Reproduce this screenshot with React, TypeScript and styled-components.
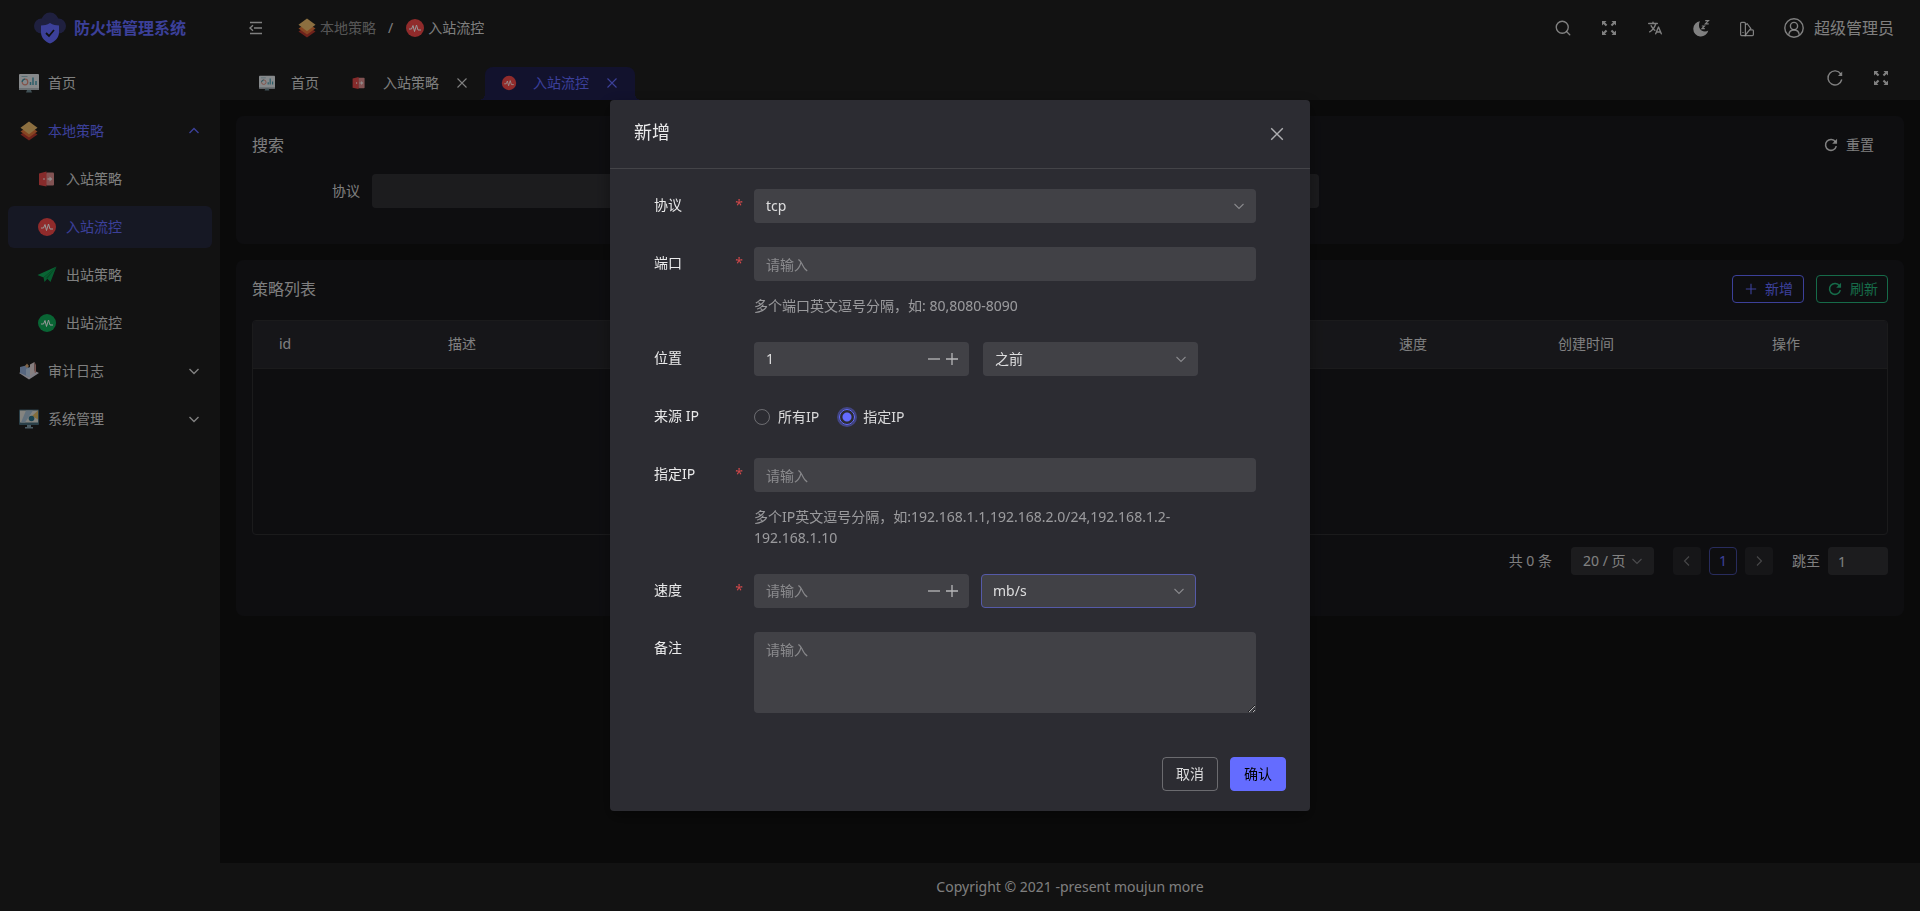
import React from 'react';
import styled, { createGlobalStyle, css } from 'styled-components';
import { Search } from 'lucide-react';
import { IoLanguage } from 'react-icons/io5';

const primary = '#646cff';
const text = 'rgba(255, 255, 255, 0.82)';
const field = 'rgba(255, 255, 255, 0.1)';

const GlobalStyle = createGlobalStyle`
  *, *::before, *::after { box-sizing: border-box; }
  html, body { margin: 0; background: #121212; color-scheme: dark; }
  body, button, input, select, textarea {
    font-family: "Noto Sans", "Noto Sans CJK SC", sans-serif;
    font-size: 14px;
    line-height: 22px;
    color: ${text};
  }
  button, input, select, textarea { margin: 0; border: 0; background: none; outline: none; }
  button { padding: 0; cursor: pointer; }
  a { color: inherit; text-decoration: none; }
`;

/* ---------- icons ---------- */

const Glyph = styled.svg.attrs({ 'aria-hidden': true })<{ $size?: number }>`
  display: block;
  flex: none;
  width: ${(p) => p.$size ?? 20}px;
  height: ${(p) => p.$size ?? 20}px;
`;

type IconProps = { size?: number };

const ShieldLogo = () => (
  <Glyph $size={32} viewBox="0 0 32 32">
    <g fill="#34366a">
      <circle cx="16" cy="9" r="8.5" />
      <circle cx="7.5" cy="14" r="7.5" />
      <circle cx="24.5" cy="14" r="7.5" />
      <rect x="8" y="10" width="16" height="11" />
    </g>
    <path d="M16 11c3 2 6 2.400 9 2.400V20c0 6-4 9.500-9 11.500C11 29.500 7 26 7 20v-6.600c3 0 6-.4 9-2.400z" fill={primary} />
    <path d="M12 21l3 3 5-6" fill="none" stroke="#1c1c1c" strokeWidth="1.800" />
  </Glyph>
);

const DashboardIcon = ({ size }: IconProps) => (
  <Glyph $size={size} viewBox="0 0 20 20">
    <rect y="1" width="20" height="16" rx="1" fill="#dfe4e8" />
    <path d="M0 15h20v2H0z" fill="#b4bcc2" />
    <path d="M8 17h4l1 2.500H7z" fill="#6d8790" />
    <circle cx="6" cy="9" r="2.800" fill="none" stroke="#d98a7a" strokeWidth="1.200" />
    <path d="M3.200 9A2.800 2.800 0 0 1 6 6.200" fill="none" stroke="#3b98a8" strokeWidth="1.200" />
    <path d="M2.500 3.500h6" stroke="#93b8c2" />
    <path d="M11.500 12V9m2.500 3V4.500m3 7.500V8" stroke="#4a9bad" strokeWidth="1.500" />
  </Glyph>
);

const LayersIcon = ({ size }: IconProps) => (
  <Glyph $size={size} viewBox="0 0 20 20">
    <path d="M1.500 13.500 10 8l8.500 5.500L10 19.500z" fill="#b8392e" />
    <path d="M1.500 10.500 10 5l8.500 5.500L10 16.500z" fill="#e2733a" />
    <path d="M1.500 6.800 10 .5l8.500 6.300L10 13.300z" fill="#e9ba6b" />
  </Glyph>
);

const DoorIcon = ({ size }: IconProps) => (
  <Glyph $size={size} viewBox="0 0 20 20">
    <rect x="9" y="3.500" width="8" height="13" rx="1" fill="#d98a8a" />
    <path d="M2 4.500 9.500 2.500v15L2 16z" fill="#e04848" />
    <circle cx="7" cy="10" r=".8" fill="#fff" />
    <path d="M10.500 9.300h2V7.500L15.500 10l-3 2.500v-1.800h-2z" fill="#f4e4e4" />
  </Glyph>
);

const PulseIcon = ({ size, color }: IconProps & { color: string }) => (
  <Glyph $size={size} viewBox="0 0 20 20">
    <circle cx="10" cy="10" r="9" fill={color} />
    <path d="M4 11h2.500l1.500-3.500 1.500 6L11.500 7l1.500 5h3" fill="none" stroke="#fff" strokeWidth="1" strokeLinejoin="round" />
  </Glyph>
);

const PlaneIcon = ({ size }: IconProps) => (
  <Glyph $size={size} viewBox="0 0 20 20">
    <path d="M19.500 1.500.5 10l6 2.500z" fill="#0fa958" />
    <path d="M19.500 1.500 6.500 12.500l1 4.500 2.800-3.200L13.500 17l6-15.500z" fill="#0d9c50" />
    <path d="M19.500 1.500 9 13l1.300.8z" fill="#0a7a3e" />
  </Glyph>
);

const AuditIcon = ({ size }: IconProps) => (
  <Glyph $size={size} viewBox="0 0 20 20">
    <path d="M0 12 10 18.500 20 12 10 7z" fill="#d5d2de" />
    <path d="M1 6l6-1.500 3 2.500v9L1 12z" fill="#8fabd4" />
    <path d="M7 8l4-2v10.500l-4-2z" fill="#b9cfe8" />
    <path d="M11 3.500 15.500 1v10.500L11 15z" fill="#e0d4d6" />
    <path d="M15.500 1 17 4v8l-1.500-.5z" fill="#c98d86" />
    <path d="M6 5l2-2.500 2 2.500-2 2z" fill="#d9a877" />
  </Glyph>
);

const SystemIcon = ({ size }: IconProps) => (
  <Glyph $size={size} viewBox="0 0 20 20">
    <rect y=".5" width="20" height="15.500" rx="1" fill="#466a78" />
    <path d="M1 1.500h18v12H1z" fill="#dcdcd6" />
    <path d="M7 1.500h7l-8 12H2z" fill="#a3bdd0" />
    <path d="M19 1.500v9L13 7z" fill="#dcb765" />
    <circle cx="12.500" cy="9.500" r="2.800" fill="#2a7289" />
    <path d="M8 16h4v2h2v1.500H6V18h2z" fill="#7d98a5" />
  </Glyph>
);

const CollapseIcon = () => (
  <Glyph $size={16} viewBox="0 0 16 16" fill="none" stroke="currentColor" strokeWidth="1.400">
    <path d="M2 2.500h12M6 8h8M2 13.500h12M5 5.200 2 8l3 2.800" />
  </Glyph>
);

const ExpandIcon = () => (
  <Glyph $size={18} viewBox="0 0 18 18">
    <g fill="currentColor">
      <path d="M2 2h4.500L5 3.500 7.300 5.800 5.800 7.300 3.500 5 2 6.500z" />
      <path d="M16 2v4.500L14.500 5l-2.300 2.300-1.500-1.500L13 3.500 11.500 2z" />
      <path d="M2 16v-4.500L3.500 13l2.300-2.300 1.500 1.500L5 14.500 6.500 16z" />
      <path d="M16 16h-4.500l1.500-1.500-2.300-2.300 1.500-1.500 2.300 2.300 1.500-1.500z" />
    </g>
  </Glyph>
);

const SleepMoonIcon = () => (
  <Glyph $size={18} viewBox="0 0 18 18">
    <path d="M8 2.300A7.600 7.600 0 1 0 16.300 11.500C13.500 13.500 8.500 12.500 7.300 8.500 6.700 6 7 4 8 2.300z" fill="currentColor" />
    <path d="M13.200 1.600h3.300l-3.200 3.300h3.400M9.800 7h2.700L10 9.700h2.800" fill="none" stroke="currentColor" strokeWidth="1.200" />
  </Glyph>
);

const SwatchIcon = () => (
  <Glyph $size={18} viewBox="0 0 18 18" fill="none" stroke="currentColor" strokeWidth="1.200">
    <path d="M2.600 4.400a1 1 0 0 1 1-1h2.800a1 1 0 0 1 1 1v12.200H3.600a1 1 0 0 1-1-1z" />
    <path d="M7.400 5.600l1.800-.9 3.600 4.800-5.400 6.500M12 10.800h2.400a1 1 0 0 1 1 1v3.800a1 1 0 0 1-1 1H6.500" />
    <path d="M5 13v1" />
  </Glyph>
);

const UserIcon = () => (
  <Glyph viewBox="0 0 20 20" fill="none" stroke="currentColor" strokeWidth="1.400">
    <circle cx="10" cy="10" r="9.200" />
    <circle cx="10" cy="8" r="3.600" />
    <path d="M4.800 16.800c.3-3 2.200-4.800 5.200-4.800s4.900 1.800 5.200 4.800" />
  </Glyph>
);

const ReloadIcon = ({ size = 18, thin = false }: IconProps & { thin?: boolean }) => (
  <Glyph $size={size} viewBox="0 0 18 18">
    <path
      d="M14.800 5A7 7 0 1 0 15.800 10.500"
      fill="none"
      stroke="currentColor"
      strokeWidth={thin ? 1.4 : 2}
    />
    <path d={thin ? 'M16.200 2.500v4.500h-4.200z' : 'M16.800 1v6.500h-6.300z'} fill="currentColor" />
  </Glyph>
);

const PlusIcon = ({ size = 14 }: IconProps) => (
  <Glyph $size={size} viewBox="0 0 14 14" stroke="currentColor" strokeWidth="1.300">
    <path d="M1 7h12M7 1v12" />
  </Glyph>
);

const MinusIcon = () => (
  <Glyph $size={14} viewBox="0 0 14 14" stroke="currentColor" strokeWidth="1.300">
    <path d="M1 7h12" />
  </Glyph>
);

const CrossIcon = ({ size = 14 }: IconProps) => (
  <Glyph $size={size} viewBox="0 0 14 14" stroke="currentColor" strokeWidth="1.100">
    <path d="M2.500 2.500l9 9M11.500 2.500l-9 9" />
  </Glyph>
);

const turns = { up: 180, down: 0, left: 90, right: -90 };

const Chevron = ({ to = 'down', size = 14, weight = 1.1 }: IconProps & { to?: keyof typeof turns; weight?: number }) => (
  <Glyph $size={size} viewBox="0 0 14 14" fill="none" stroke="currentColor" strokeWidth={weight}>
    <path d="M2.500 5 7 9.500 11.500 5" transform={`rotate(${turns[to]} 7 7)`} />
  </Glyph>
);

/* ---------- page frame ---------- */

const Page = styled.div`
  display: grid;
  grid-template-columns: 220px minmax(0, 1fr);
  min-height: 100vh;
`;

const Sidebar = styled.aside`
  background: #1e1e1e;
`;

const Brand = styled.a`
  display: flex;
  align-items: center;
  justify-content: center;
  gap: 8px;
  height: 56px;
  color: ${primary};
  font-size: 16px;
  font-weight: 700;
`;

const Menu = styled.nav`
  display: flex;
  flex-direction: column;
  gap: 6px;
  padding: 6px 8px;
`;

const MenuItem = styled.a<{ $sub?: boolean; $active?: boolean; $open?: boolean }>`
  display: flex;
  align-items: center;
  gap: 9px;
  height: 42px;
  padding: 0 11px 0 ${(p) => (p.$sub ? 29 : 11)}px;
  border-radius: 6px;
  color: ${(p) => (p.$active || p.$open ? primary : text)};
  background: ${(p) => (p.$active ? '#26283d' : 'transparent')};
`;

const MenuText = styled.span`
  flex: 1;
`;

const Column = styled.div`
  display: flex;
  flex-direction: column;
  min-width: 0;
`;

const TopBar = styled.header`
  display: flex;
  align-items: center;
  justify-content: space-between;
  height: 56px;
  padding: 0 26px 0 27px;
  background: #1e1e1e;
`;

const Crumbs = styled.nav`
  display: flex;
  align-items: center;
  gap: 32px;
`;

const CrumbList = styled.div`
  display: flex;
  align-items: center;
  gap: 12px;
`;

const Crumb = styled.a<{ $muted?: boolean }>`
  display: flex;
  align-items: center;
  gap: 3px;
  color: ${(p) => (p.$muted ? 'rgba(255, 255, 255, 0.52)' : text)};
`;

const Tools = styled.div`
  display: flex;
  align-items: center;
  gap: 28px;
`;

const ToolButton = styled.button`
  display: flex;
  align-items: center;
  justify-content: center;
  gap: 10px;
  min-width: 18px;
  font-size: 16px;
`;

const TabBar = styled.div`
  display: flex;
  align-items: flex-end;
  justify-content: space-between;
  height: 44px;
  padding: 0 30px 0 23px;
  background: #1e1e1e;
`;

const Tabs = styled.div`
  display: flex;
`;

const Tab = styled.div<{ $active?: boolean }>`
  position: relative;
  display: flex;
  align-items: center;
  gap: 16px;
  height: 33px;
  padding: 0 16px 2px;
  border-radius: 8px 8px 0 0;
  ${(p) =>
    p.$active &&
    css`
      color: ${primary};
      background: #1e1e4c;
      &::before,
      &::after {
        content: '';
        position: absolute;
        bottom: 0;
        width: 6px;
        height: 6px;
      }
      &::before {
        right: 100%;
        background: radial-gradient(circle at 0 0, transparent 6px, #1e1e4c 6px);
      }
      &::after {
        left: 100%;
        background: radial-gradient(circle at 100% 0, transparent 6px, #1e1e4c 6px);
      }
    `}
`;

const TabClose = styled.button`
  color: inherit;
`;

const TabTools = styled(Tools)`
  height: 44px;
`;

const Content = styled.main`
  display: flex;
  flex: 1;
  flex-direction: column;
  gap: 16px;
  padding: 16px;
  background: #121212;
`;

const Footer = styled.footer`
  display: flex;
  align-items: center;
  justify-content: center;
  height: 48px;
  background: #1e1e1e;
`;

/* ---------- cards ---------- */

const Card = styled.section<{ $bottom: number }>`
  padding: 14px 16px ${(p) => p.$bottom}px;
  border-radius: 8px;
  background: #18181c;
`;

const CardHead = styled.div`
  display: flex;
  align-items: center;
  justify-content: space-between;
  height: 30px;
`;

const CardTitle = styled.h2`
  margin: 0;
  font-size: 16px;
  font-weight: 400;
`;

const ResetButton = styled.button`
  display: flex;
  align-items: center;
  gap: 8px;
  padding: 0 14px;
`;

const SearchForm = styled.form`
  display: grid;
  grid-template-columns: 108px 17fr 10fr;
  gap: 12px;
  align-items: center;
  margin-top: 14px;
`;

const SearchLabel = styled.label`
  text-align: right;
`;

const Actions = styled.div`
  display: flex;
  gap: 12px;
`;

const OutlineButton = styled.button<{ $color: string }>`
  display: flex;
  align-items: center;
  justify-content: center;
  gap: 8px;
  width: 72px;
  height: 28px;
  padding-left: 2px;
  border: 1px solid ${(p) => p.$color};
  border-radius: 4px;
  color: ${(p) => p.$color};
`;

const TableFrame = styled.div`
  height: 215px;
  margin-top: 16px;
  border: 1px solid #2d2d30;
  border-radius: 4px;
  overflow: hidden;
`;

const Table = styled.table`
  width: 100%;
  border-collapse: collapse;
  table-layout: fixed;
`;

const Th = styled.th<{ $width?: number }>`
  width: ${(p) => (p.$width ? `${p.$width}px` : 'auto')};
  height: 47px;
  padding: 0;
  border-bottom: 1px solid #2d2d30;
  background: #26262a;
  font-weight: 400;
  text-align: center;
`;

const Pager = styled.div`
  display: flex;
  align-items: center;
  justify-content: flex-end;
  gap: 19px;
  margin-top: 12px;
`;

const PagerGroup = styled.div`
  display: flex;
  align-items: center;
  gap: 8px;
`;

const PageButton = styled.button<{ $current?: boolean }>`
  display: flex;
  align-items: center;
  justify-content: center;
  width: 28px;
  height: 28px;
  border-radius: 4px;
  color: ${(p) => (p.$current ? primary : 'rgba(255, 255, 255, 0.38)')};
  background: ${(p) => (p.$current ? 'transparent' : 'rgba(255, 255, 255, 0.06)')};
  border: ${(p) => (p.$current ? '1px solid #444a9c' : '0')};
`;

/* ---------- form controls ---------- */

const fieldStyle = css`
  width: 100%;
  height: 34px;
  padding: 0 12px;
  border-radius: 4px;
  background: ${field};
  &::placeholder {
    color: rgba(255, 255, 255, 0.38);
    opacity: 1;
  }
`;

const Input = styled.input`
  ${fieldStyle}
`;

const JumpInput = styled(Input)`
  width: 60px;
  height: 28px;
  padding: 0 10px;
`;

const TextArea = styled.textarea`
  ${fieldStyle}
  display: block;
  height: 81px;
  padding: 7px 12px;
  resize: vertical;
`;

const SelectBox = styled.div<{ $width?: string }>`
  display: grid;
  align-items: center;
  width: ${(p) => p.$width ?? '100%'};
  color: rgba(255, 255, 255, 0.38);
  & > * {
    grid-area: 1 / 1;
  }
  & > svg {
    justify-self: end;
    margin-right: 10px;
    pointer-events: none;
  }
`;

const SelectControl = styled.select<{ $focused?: boolean; $small?: boolean }>`
  ${fieldStyle}
  height: ${(p) => (p.$small ? 28 : 34)}px;
  padding: 0 11px;
  appearance: none;
  border: 1px solid ${(p) => (p.$focused ? '#555aa8' : 'transparent')};
  background-clip: border-box;
  background-origin: border-box;
`;

type SelectProps = {
  id: string;
  value: string;
  label?: string;
  width?: string;
  focused?: boolean;
  small?: boolean;
};

const Select = ({ id, value, label, width, focused, small }: SelectProps) => (
  <SelectBox $width={width}>
    <SelectControl id={id} aria-label={label} defaultValue={value} $focused={focused} $small={small}>
      <option value={value}>{value}</option>
    </SelectControl>
    <Chevron />
  </SelectBox>
);

const Stepper = styled.div`
  display: flex;
  align-items: center;
  gap: 4px;
  width: 215px;
  height: 34px;
  padding: 0 10px 0 12px;
  border-radius: 4px;
  background: ${field};
`;

const StepperInput = styled.input`
  flex: 1;
  min-width: 0;
  padding: 0;
  &::placeholder {
    color: rgba(255, 255, 255, 0.38);
    opacity: 1;
  }
`;

const StepButton = styled.button`
  color: rgba(255, 255, 255, 0.62);
`;

const NumberField = ({ id, value }: { id: string; value?: string }) => (
  <Stepper>
    <StepperInput id={id} defaultValue={value} placeholder="请输入" inputMode="numeric" />
    <StepButton type="button" aria-label="减少"><MinusIcon /></StepButton>
    <StepButton type="button" aria-label="增加"><PlusIcon /></StepButton>
  </Stepper>
);

/* ---------- dialog ---------- */

const Overlay = styled.div`
  position: fixed;
  inset: 0;
  display: flex;
  align-items: center;
  justify-content: center;
  background: rgba(0, 0, 0, 0.4);
`;

const Dialog = styled.div`
  width: 700px;
  max-width: 100%;
  border-radius: 4px;
  background: #2c2c32;
  box-shadow: 0 6px 16px rgba(0, 0, 0, 0.4);
`;

const DialogHead = styled.div`
  display: flex;
  align-items: center;
  justify-content: space-between;
  height: 69px;
  padding: 0 24px;
  border-bottom: 1px solid #444448;
`;

const DialogTitle = styled.h1`
  margin: 0;
  padding-bottom: 4px;
  color: rgba(255, 255, 255, 0.9);
  font-size: 18px;
  line-height: 24px;
  font-weight: 400;
`;

const CloseButton = styled.button`
  color: rgba(255, 255, 255, 0.62);
`;

const FormBody = styled.div`
  display: flex;
  flex-direction: column;
  gap: 24px;
  padding: 20px 54px 44px 44px;
`;

const FormRow = styled.div`
  display: grid;
  grid-template-columns: 100px minmax(0, 1fr);
`;

const RowLabel = styled.label<{ $required?: boolean }>`
  display: flex;
  justify-content: space-between;
  height: 34px;
  padding-right: 11px;
  line-height: 32px;
  color: rgba(255, 255, 255, 0.9);
  ${(p) =>
    p.$required &&
    css`
      &::after {
        content: '*';
        color: #d0484a;
      }
    `}
`;

const Hint = styled.p`
  margin: 0;
  padding: 14px 60px 2px 0;
  line-height: 21px;
  color: rgba(255, 255, 255, 0.52);
`;

const Inline = styled.div<{ $gap: number }>`
  display: flex;
  align-items: center;
  gap: ${(p) => p.$gap}px;
  min-height: 34px;
`;

const RadioLabel = styled.label`
  display: flex;
  align-items: center;
  gap: 8px;
`;

const Radio = styled.input.attrs({ type: 'radio' })`
  appearance: none;
  width: 16px;
  height: 16px;
  border: 1px solid rgba(255, 255, 255, 0.3);
  border-radius: 50%;
  &:checked {
    border-color: ${primary};
    background: radial-gradient(circle, ${primary} 4px, transparent 5px);
    box-shadow: 0 0 0 2px rgba(100, 108, 255, 0.4);
  }
`;

const DialogFoot = styled.div`
  display: flex;
  justify-content: flex-end;
  gap: 12px;
  padding: 0 24px 20px;
`;

const DialogButton = styled.button<{ $primary?: boolean }>`
  width: 56px;
  height: 34px;
  border-radius: 4px;
  border: 1px solid ${(p) => (p.$primary ? primary : 'rgba(255, 255, 255, 0.3)')};
  background: ${(p) => (p.$primary ? primary : 'transparent')};
  color: ${(p) => (p.$primary ? '#000' : text)};
`;

type RowProps = {
  label: string;
  htmlFor?: string;
  required?: boolean;
  hint?: string;
  children: React.ReactNode;
};

const Field = ({ label, htmlFor, required, hint, children }: RowProps) => (
  <FormRow>
    <RowLabel as={htmlFor ? 'label' : 'span'} htmlFor={htmlFor} $required={required}>{label}</RowLabel>
    <div>
      {children}
      {hint && <Hint>{hint}</Hint>}
    </div>
  </FormRow>
);

const red = '#f04848';
const green = '#0fa958';

const App = () => (
  <>
    <GlobalStyle />
    <Page>
      <Sidebar>
        <Brand href="#">
          <ShieldLogo />
          防火墙管理系统
        </Brand>
        <Menu>
          <MenuItem href="#"><DashboardIcon /><MenuText>首页</MenuText></MenuItem>
          <MenuItem href="#" $open><LayersIcon /><MenuText>本地策略</MenuText><Chevron to="up" weight={1.4} /></MenuItem>
          <MenuItem href="#" $sub><DoorIcon /><MenuText>入站策略</MenuText></MenuItem>
          <MenuItem href="#" $sub $active><PulseIcon color={red} /><MenuText>入站流控</MenuText></MenuItem>
          <MenuItem href="#" $sub><PlaneIcon /><MenuText>出站策略</MenuText></MenuItem>
          <MenuItem href="#" $sub><PulseIcon color={green} /><MenuText>出站流控</MenuText></MenuItem>
          <MenuItem href="#"><AuditIcon /><MenuText>审计日志</MenuText><Chevron weight={1.4} /></MenuItem>
          <MenuItem href="#"><SystemIcon /><MenuText>系统管理</MenuText><Chevron weight={1.4} /></MenuItem>
        </Menu>
      </Sidebar>

      <Column>
        <TopBar>
          <Crumbs>
            <ToolButton aria-label="折叠菜单"><CollapseIcon /></ToolButton>
            <CrumbList>
              <Crumb href="#" $muted><LayersIcon />本地策略</Crumb>
              <span>/</span>
              <Crumb href="#"><PulseIcon color={red} />入站流控</Crumb>
            </CrumbList>
          </Crumbs>
          <Tools>
            <ToolButton aria-label="搜索"><Search size={18} strokeWidth={1.8} /></ToolButton>
            <ToolButton aria-label="全屏"><ExpandIcon /></ToolButton>
            <ToolButton aria-label="语言"><IoLanguage size={16} /></ToolButton>
            <ToolButton aria-label="深色模式"><SleepMoonIcon /></ToolButton>
            <ToolButton aria-label="主题配置"><SwatchIcon /></ToolButton>
            <ToolButton><UserIcon />超级管理员</ToolButton>
          </Tools>
        </TopBar>

        <TabBar>
          <Tabs>
            <Tab><DashboardIcon size={16} />首页</Tab>
            <Tab><DoorIcon size={16} />入站策略<TabClose aria-label="关闭入站策略"><CrossIcon /></TabClose></Tab>
            <Tab $active><PulseIcon size={16} color={red} />入站流控<TabClose aria-label="关闭入站流控"><CrossIcon /></TabClose></Tab>
          </Tabs>
          <TabTools>
            <ToolButton aria-label="重新加载"><ReloadIcon thin /></ToolButton>
            <ToolButton aria-label="内容全屏"><ExpandIcon /></ToolButton>
          </TabTools>
        </TabBar>

        <Content>
          <Card $bottom={36}>
            <CardHead>
              <CardTitle>搜索</CardTitle>
              <ResetButton><ReloadIcon size={14} />重置</ResetButton>
            </CardHead>
            <SearchForm>
              <SearchLabel htmlFor="search-protocol">协议</SearchLabel>
              <Input id="search-protocol" />
            </SearchForm>
          </Card>

          <Card $bottom={41}>
            <CardHead>
              <CardTitle>策略列表</CardTitle>
              <Actions>
                <OutlineButton $color={primary}><PlusIcon size={12} />新增</OutlineButton>
                <OutlineButton $color="#25b27a"><ReloadIcon size={14} />刷新</OutlineButton>
              </Actions>
            </CardHead>
            <TableFrame>
              <Table>
                <thead>
                  <tr>
                    <Th $width={64}>id</Th>
                    <Th $width={290}>描述</Th>
                    <Th />
                    <Th $width={148}>速度</Th>
                    <Th $width={198}>创建时间</Th>
                    <Th $width={202}>操作</Th>
                  </tr>
                </thead>
              </Table>
            </TableFrame>
            <Pager>
              <span>共 0 条</span>
              <Select id="page-size" label="每页条数" value="20 / 页" width="83px" small />
              <PagerGroup>
                <PageButton aria-label="上一页"><Chevron to="left" /></PageButton>
                <PageButton $current>1</PageButton>
                <PageButton aria-label="下一页"><Chevron to="right" /></PageButton>
              </PagerGroup>
              <PagerGroup>
                <label htmlFor="page-jump">跳至</label>
                <JumpInput id="page-jump" defaultValue="1" />
              </PagerGroup>
            </Pager>
          </Card>
        </Content>

        <Footer>Copyright © 2021 -present moujun more</Footer>
      </Column>
    </Page>

    <Overlay>
      <Dialog role="dialog" aria-modal="true" aria-labelledby="dialog-title">
        <DialogHead>
          <DialogTitle id="dialog-title">新增</DialogTitle>
          <CloseButton aria-label="关闭"><CrossIcon size={18} /></CloseButton>
        </DialogHead>
        <FormBody>
          <Field label="协议" htmlFor="protocol" required>
            <Select id="protocol" value="tcp" />
          </Field>
          <Field label="端口" htmlFor="port" required hint="多个端口英文逗号分隔，如: 80,8080-8090">
            <Input id="port" placeholder="请输入" />
          </Field>
          <Field label="位置" htmlFor="position">
            <Inline $gap={14}>
              <NumberField id="position" value="1" />
              <Select id="position-side" label="位置方向" value="之前" width="215px" />
            </Inline>
          </Field>
          <Field label="来源 IP">
            <Inline $gap={20}>
              <RadioLabel><Radio name="source" />所有IP</RadioLabel>
              <RadioLabel><Radio name="source" defaultChecked />指定IP</RadioLabel>
            </Inline>
          </Field>
          <Field
            label="指定IP"
            htmlFor="ip"
            required
            hint="多个IP英文逗号分隔，如:192.168.1.1,192.168.2.0/24,192.168.1.2-192.168.1.10"
          >
            <Input id="ip" placeholder="请输入" />
          </Field>
          <Field label="速度" htmlFor="speed" required>
            <Inline $gap={12}>
              <NumberField id="speed" />
              <Select id="speed-unit" label="速度单位" value="mb/s" width="215px" focused />
            </Inline>
          </Field>
          <Field label="备注" htmlFor="remark">
            <TextArea id="remark" placeholder="请输入" />
          </Field>
        </FormBody>
        <DialogFoot>
          <DialogButton>取消</DialogButton>
          <DialogButton $primary>确认</DialogButton>
        </DialogFoot>
      </Dialog>
    </Overlay>
  </>
);

export default App;
